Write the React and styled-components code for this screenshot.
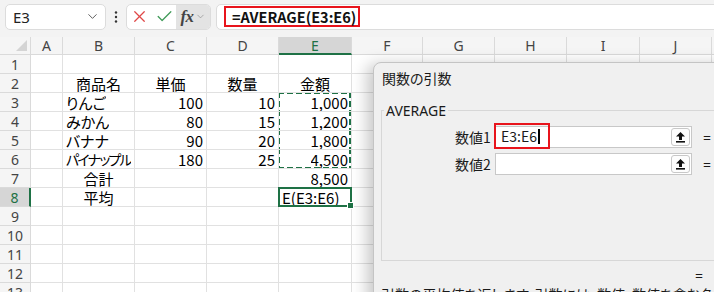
import React from "react";
import styled, { createGlobalStyle } from "styled-components";
import { ChevronDown, X, Check } from "lucide-react";

const GlobalStyle = createGlobalStyle`
  html, body { margin: 0; padding: 0; background: #fff; }
  body {
    font-family: "Noto Sans CJK JP", "Noto Sans", sans-serif;
    font-feature-settings: "palt";
  }
`;

const GREEN = "#1e7145";

const columns = [
  { key: "A", w: 32 },
  { key: "B", w: 72 },
  { key: "C", w: 72 },
  { key: "D", w: 72 },
  { key: "E", w: 73 },
  { key: "F", w: 71 },
  { key: "G", w: 72 },
  { key: "H", w: 72 },
  { key: "I", w: 73 },
  { key: "J", w: 72 },
  { key: "K", w: 72 },
];

const sheet = {
  2: { B: ["商品名", "center"], C: ["単価", "center"], D: ["数量", "center"], E: ["金額", "center"] },
  3: { B: ["りんご", "left"], C: ["100", "right"], D: ["10", "right"], E: ["1,000", "right"] },
  4: { B: ["みかん", "left"], C: ["80", "right"], D: ["15", "right"], E: ["1,200", "right"] },
  5: { B: ["バナナ", "left"], C: ["90", "right"], D: ["20", "right"], E: ["1,800", "right"] },
  6: { B: ["パイナップル", "left", true], C: ["180", "right"], D: ["25", "right"], E: ["4,500", "right"] },
  7: { B: ["合計", "center"], E: ["8,500", "right"] },
  8: { B: ["平均", "center"], E: ["E(E3:E6)", "left"] },
};

const ants = { 3: "top", 4: "mid", 5: "mid", 6: "bottom" };

const dashV = `repeating-linear-gradient(to bottom, ${GREEN} 0 6px, transparent 6px 9px)`;
const dashH = `repeating-linear-gradient(to right, ${GREEN} 0 6px, transparent 6px 9px)`;

const Page = styled.div`
  position: relative;
  width: 714px;
  height: 292px;
  overflow: hidden;
  background: #fff;
`;

const Toolbar = styled.div`
  display: flex;
  align-items: center;
  height: 37px;
  padding: 0 0 4px 5px;
  box-sizing: border-box;
  background: #f3f3f3;
`;

const NameBox = styled.div`
  display: flex;
  align-items: center;
  justify-content: space-between;
  width: 101px;
  height: 26px;
  box-sizing: border-box;
  padding: 0 5px 0 7px;
  background: #fff;
  border: 1px solid #dcdcdc;
  border-radius: 5px;
  font-family: "Noto Sans", sans-serif;
  font-size: 15px;
  color: #222;
`;

const Grip = styled.svg`
  margin: 0 8px;
`;

const ButtonGroup = styled.div`
  display: flex;
  align-items: stretch;
  width: 85px;
  height: 26px;
  box-sizing: border-box;
  background: #fff;
  border: 1px solid #dcdcdc;
  border-radius: 5px;
  overflow: hidden;
`;

const IconBtn = styled.div`
  display: flex;
  align-items: center;
  justify-content: center;
  width: ${(p) => p.$w}px;
  background: ${(p) => (p.$shade ? "#e3e3e3" : "transparent")};
  gap: 1px;
`;

const Fx = styled.span`
  font-family: "Liberation Serif", serif;
  font-style: italic;
  font-weight: bold;
  font-size: 17px;
  color: #444;
  letter-spacing: -0.5px;
`;

const FormulaBox = styled.div`
  flex: 1;
  display: flex;
  align-items: center;
  height: 26px;
  margin-left: 5px;
  margin-right: -10px;
  padding-left: 7px;
  box-sizing: border-box;
  background: #fff;
  border: 1px solid #dcdcdc;
  border-radius: 5px;
`;

const Highlight = styled.div`
  display: flex;
  align-items: center;
  box-sizing: border-box;
  border: 2px solid #e8141c;
  height: ${(p) => p.$h}px;
  width: ${(p) => p.$w}px;
  padding-left: ${(p) => p.$pad}px;
`;

const FormulaText = styled.span`
  font-weight: bold;
  font-size: 14.5px;
  color: #111;
  white-space: pre;
`;

const Grid = styled.div`
  display: flex;
  flex-direction: column;
`;

const Row = styled.div`
  display: flex;
  height: ${(p) => p.$h}px;
`;

const Corner = styled.div`
  position: relative;
  width: 31px;
  flex: none;
  box-sizing: border-box;
  background: #f5f5f5;
  border-right: 1px solid #dadada;
  border-bottom: 1px solid #dadada;
  &::after {
    content: "";
    position: absolute;
    right: 3px;
    bottom: 3px;
    border-left: 11px solid transparent;
    border-bottom: 11px solid #d4d4d4;
  }
`;

const ColHead = styled.div`
  width: ${(p) => p.$w}px;
  flex: none;
  display: flex;
  align-items: center;
  justify-content: center;
  box-sizing: border-box;
  font-family: "Noto Sans", sans-serif;
  font-size: 14px;
  color: ${(p) => (p.$sel ? GREEN : "#444")};
  background: ${(p) => (p.$sel ? "#d6d6d6" : "#f5f5f5")};
  border-right: 1px solid #dadada;
  border-bottom: ${(p) => (p.$sel ? `2px solid ${GREEN}` : "1px solid #dadada")};
`;

const RowHead = styled.div`
  width: 31px;
  flex: none;
  display: flex;
  align-items: center;
  justify-content: center;
  box-sizing: border-box;
  font-family: "Noto Sans", sans-serif;
  font-size: 14px;
  color: ${(p) => (p.$sel ? GREEN : "#444")};
  background: ${(p) => (p.$sel ? "#d6d6d6" : "#f5f5f5")};
  border-right: ${(p) => (p.$sel ? `2px solid ${GREEN}` : "1px solid #dadada")};
  border-bottom: 1px solid #dadada;
`;

const Cell = styled.div`
  position: relative;
  width: ${(p) => p.$w}px;
  flex: none;
  box-sizing: border-box;
  display: flex;
  align-items: center;
  justify-content: ${(p) =>
    p.$align === "right" ? "flex-end" : p.$align === "center" ? "center" : "flex-start"};
  padding: 0 3px;
  font-size: 15px;
  color: #000;
  white-space: nowrap;
  overflow: ${(p) => (p.$active ? "visible" : "hidden")};
  border-right: 1px solid #e1e1e1;
  border-bottom: 1px solid #e1e1e1;

  ${(p) =>
    p.$ants &&
    `
    &::after {
      content: "";
      position: absolute;
      left: -1px;
      right: 0;
      top: ${p.$ants === "top" ? "-1px" : "-2px"};
      bottom: -1px;
      background:
        ${dashV} left top / 2px 100% no-repeat,
        ${dashV} right top / 2px 100% no-repeat
        ${p.$ants === "top" ? `, ${dashH} left top / 100% 2px no-repeat` : ""}
        ${p.$ants === "bottom" ? `, ${dashH} left bottom / 100% 2px no-repeat` : ""};
    }
  `}

  ${(p) =>
    p.$active &&
    `
    &::after {
      content: "";
      position: absolute;
      left: -1px;
      right: -1px;
      top: -1px;
      bottom: -1px;
      border: 2px solid ${GREEN};
    }
    &::before {
      content: "";
      position: absolute;
      right: -3px;
      bottom: -3px;
      width: 5px;
      height: 5px;
      background: ${GREEN};
      border: 1px solid #fff;
      z-index: 1;
    }
  `}
`;

const CellText = styled.span`
  overflow: hidden;
  font-size: ${(p) => (p.$tight ? "14px" : "inherit")};
  letter-spacing: ${(p) => (p.$tight ? "-1.8px" : "normal")};
`;

const Dialog = styled.div`
  position: absolute;
  left: 373px;
  top: 62px;
  width: 360px;
  height: 250px;
  display: flex;
  flex-direction: column;
  background: #f0f0f0;
  border: 1px solid #c4c4c4;
  border-top-left-radius: 8px;
  box-shadow: -6px 2px 16px rgba(0, 0, 0, 0.22);
  font-size: 14px;
  color: #1a1a1a;
`;

const Title = styled.div`
  height: 30px;
  display: flex;
  align-items: center;
  padding-left: 8px;
  font-size: 14px;
`;

const Group = styled.fieldset`
  margin: 8px 0 0 7px;
  padding: 6px 0 0 0;
  height: 160px;
  box-sizing: border-box;
  border: 1px solid #d7d7d7;
  border-right: none;
  display: flex;
  flex-direction: column;
  gap: 5px;
`;

const Legend = styled.legend`
  padding: 0 2px;
  margin-left: 2px;
  font-family: "Noto Sans", sans-serif;
  font-size: 14px;
`;

const ArgRow = styled.div`
  display: flex;
  align-items: center;
  padding-left: 73px;
  height: 22px;
`;

const ArgLabel = styled.div`
  width: 40px;
  flex: none;
`;

const ArgInput = styled.div`
  position: relative;
  width: 197px;
  height: 22px;
  box-sizing: border-box;
  background: #fff;
  border: 1px solid #c8c8c8;
  display: flex;
  align-items: center;
  justify-content: flex-end;
  padding-right: 1px;
`;

const ArgValue = styled.div`
  position: absolute;
  left: -2px;
  top: -4px;
`;

const Caret = styled.span`
  display: inline-block;
  width: 2px;
  height: 15px;
  margin-left: 1px;
  background: #000;
`;

const RefButton = styled.div`
  width: 19px;
  height: 18px;
  box-sizing: border-box;
  border: 1px solid #c8c8c8;
  border-radius: 3px;
  background: #fdfdfd;
  display: flex;
  align-items: center;
  justify-content: center;
`;

const Equals = styled.div`
  margin-left: 11px;
  font-family: "Noto Sans", sans-serif;
`;

const ResultRow = styled.div`
  display: flex;
  padding-left: 321px;
  margin-top: 4px;
  height: 20px;
  align-items: center;
  font-family: "Noto Sans", sans-serif;
`;

const Description = styled.div`
  padding-left: 7px;
  margin-top: -1px;
  white-space: nowrap;
  font-size: 14px;
  line-height: 20px;
`;

const UpArrow = () => (
  <svg width="11" height="12" viewBox="0 0 11 12">
    <path d="M5.5 1 L10 5.5 H7 V9 H4 V5.5 H1 Z" fill="#111" />
    <rect x="1" y="10" width="9" height="1.6" fill="#111" />
  </svg>
);

const ArgField = ({ label, value }) => (
  <ArgRow>
    <ArgLabel>{label}</ArgLabel>
    <ArgInput>
      {value && (
        <ArgValue>
          <Highlight $h={26} $w={56} $pad={5}>
            <span style={{ fontSize: 14 }}>{value}</span>
            <Caret />
          </Highlight>
        </ArgValue>
      )}
      <RefButton>
        <UpArrow />
      </RefButton>
    </ArgInput>
    <Equals>=</Equals>
  </ArgRow>
);

const rowNumbers = Array.from({ length: 13 }, (_, i) => i + 1);

export default function App() {
  return (
    <Page>
      <GlobalStyle />
      <Toolbar>
        <NameBox>
          E3
          <ChevronDown size={15} strokeWidth={1.5} color="#555" />
        </NameBox>
        <Grip width="4" height="14" viewBox="0 0 4 14">
          <circle cx="2" cy="2.5" r="1.2" fill="#333" />
          <circle cx="2" cy="7" r="1.2" fill="#333" />
          <circle cx="2" cy="11.5" r="1.2" fill="#333" />
        </Grip>
        <ButtonGroup>
          <IconBtn $w={25}>
            <X size={19} strokeWidth={1.6} color="#e04848" />
          </IconBtn>
          <IconBtn $w={24}>
            <Check size={19} strokeWidth={1.6} color="#3f9a58" />
          </IconBtn>
          <IconBtn $w={34} $shade>
            <Fx>fx</Fx>
            <ChevronDown size={11} strokeWidth={1.4} color="#888" />
          </IconBtn>
        </ButtonGroup>
        <FormulaBox>
          <Highlight $h={21} $w={136} $pad={6}>
            <FormulaText>=AVERAGE(E3:E6)</FormulaText>
          </Highlight>
        </FormulaBox>
      </Toolbar>

      <Grid>
        <Row $h={18}>
          <Corner />
          {columns.map((c) => (
            <ColHead key={c.key} $w={c.w} $sel={c.key === "E"}>
              {c.key}
            </ColHead>
          ))}
        </Row>
        {rowNumbers.map((r) => (
          <Row key={r} $h={19}>
            <RowHead $sel={r === 8}>{r}</RowHead>
            {columns.map((c) => {
              const data = sheet[r] && sheet[r][c.key];
              return (
                <Cell
                  key={c.key}
                  $w={c.w}
                  $align={data ? data[1] : "left"}
                  $ants={c.key === "E" ? ants[r] : undefined}
                  $active={c.key === "E" && r === 8}
                >
                  {data && <CellText $tight={data[2]}>{data[0]}</CellText>}
                </Cell>
              );
            })}
          </Row>
        ))}
      </Grid>

      <Dialog>
        <Title>関数の引数</Title>
        <Group>
          <Legend>AVERAGE</Legend>
          <ArgField label="数値1" value="E3:E6" />
          <ArgField label="数値2" />
        </Group>
        <ResultRow>=</ResultRow>
        <Description>
          引数の平均値を返します。引数には、数値、数値を含む名前、配列、またはセル参照を指定します。
        </Description>
      </Dialog>
    </Page>
  );
}
